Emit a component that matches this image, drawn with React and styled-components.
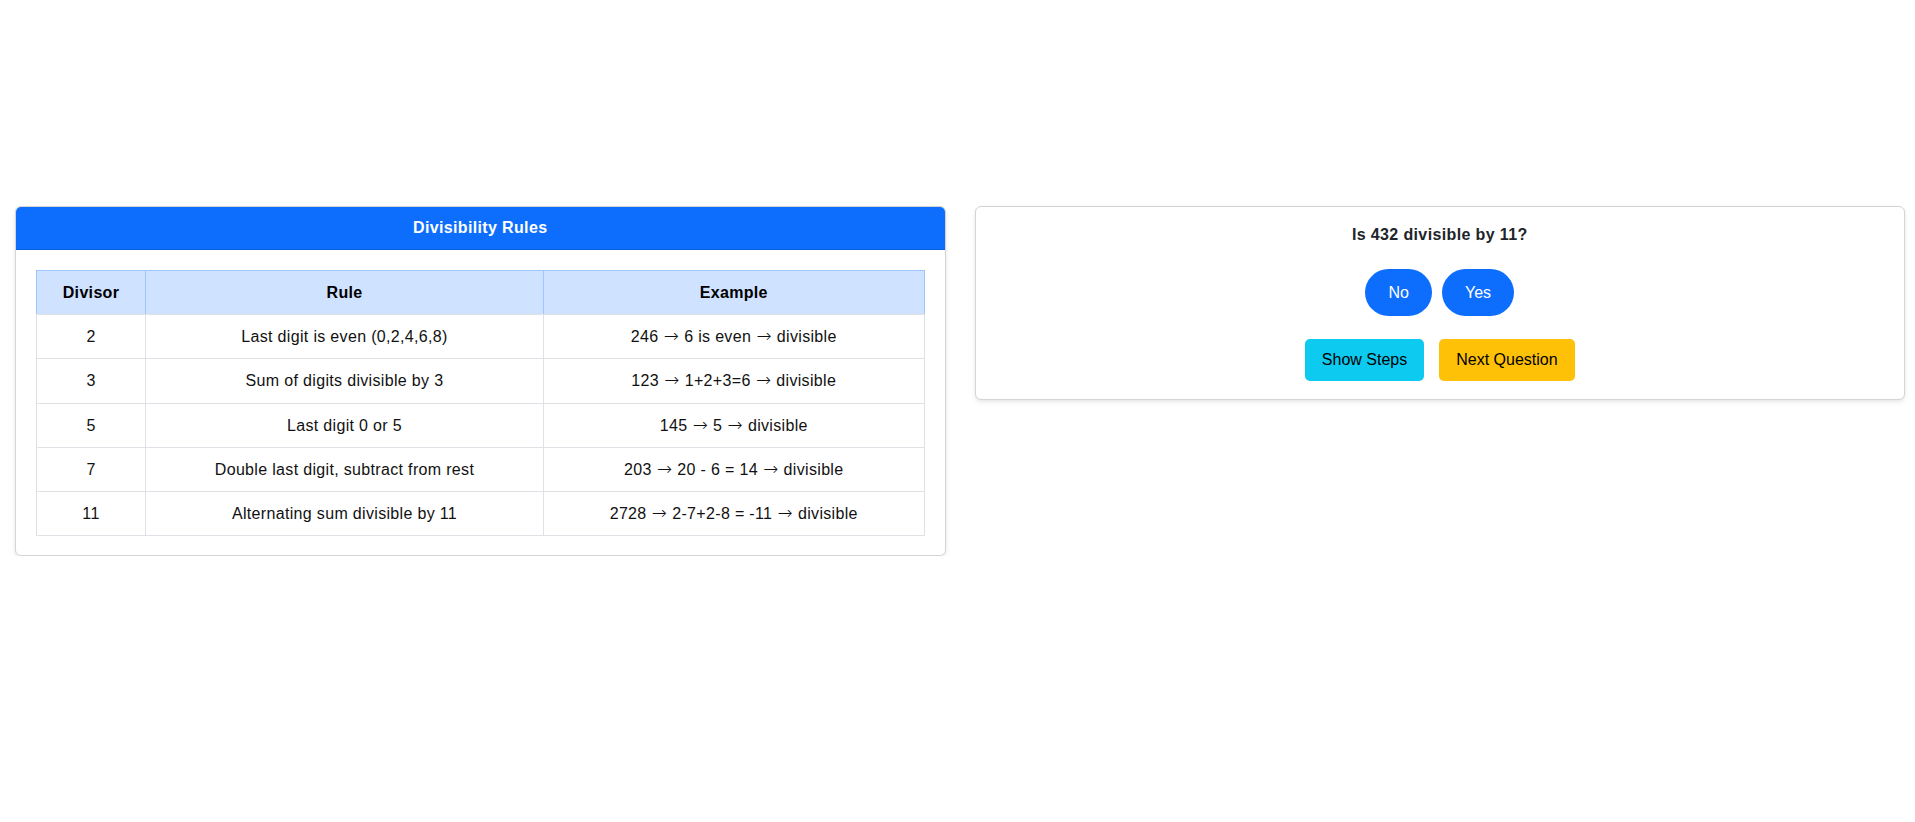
import React from "react";
import styled, { createGlobalStyle } from "styled-components";

const GlobalStyle = createGlobalStyle`
  html, body {
    margin: 0;
    padding: 0;
    background: #ffffff;
    font-family: "Liberation Sans", Arial, Helvetica, sans-serif;
    font-size: 16px;
    color: #212529;
  }
  * { box-sizing: border-box; }
`;

const Page = styled.div`
  display: grid;
  grid-template-columns: 1fr 1fr;
  gap: 29px;
  align-items: start;
  padding: 206px 10px 0 15px;
`;

const Panel = styled.section`
  background: #fff;
  border: 1px solid #d4d4d4;
  border-radius: 6px;
  box-shadow: 0 2px 4px rgba(0, 0, 0, 0.1);
  overflow: hidden;
`;

const PanelHeader = styled.header`
  background: #0d6efd;
  color: #fff;
  font-weight: bold;
  text-align: center;
  padding: 12px 16px;
  line-height: 18px;
  letter-spacing: 0.35px;
  border-bottom: 1px solid #0b5ed7;
`;

const PanelBody = styled.div`
  padding: 20px 20px 19px;
`;

const Table = styled.table`
  width: 100%;
  border-collapse: collapse;
  text-align: center;
  letter-spacing: 0.33px;
`;

const Th = styled.th`
  background: #cfe2ff;
  border: 1px solid #9ec5fe;
  border-bottom: 1px solid #dee2e6;
  padding: 12px 8px;
  line-height: 19.2px;
  font-weight: bold;
  color: #000;
  width: ${(p) => p.$w || "auto"};
`;

const Td = styled.td`
  border: 1px solid #dee2e6;
  padding: 12px 8px;
  line-height: 19.2px;
  color: #111;
`;

const Arrow = styled.span`
  font-family: "DejaVu Sans", sans-serif;
  font-weight: 200;
  font-size: 18px;
  line-height: 0;
  letter-spacing: 0;
  margin: 0 0.5px;
`;

const QuizBody = styled.div`
  padding: 18px 20px 18px;
  display: flex;
  flex-direction: column;
  align-items: center;
`;

const Question = styled.div`
  font-weight: bold;
  font-size: 16px;
  letter-spacing: 0.37px;
  line-height: 19px;
  color: #212529;
  margin-bottom: 25px;
`;

const ButtonRow = styled.div`
  display: flex;
  justify-content: center;
  gap: ${(p) => p.$gap}px;
  margin-bottom: ${(p) => p.$mb || 0}px;
`;

const AnswerButton = styled.button`
  font-family: inherit;
  font-size: 16px;
  line-height: 19px;
  padding: 14px 23px;
  border: none;
  border-radius: 25px;
  background: #0d6efd;
  color: #fff;
  cursor: pointer;
`;

const ActionButton = styled.button`
  font-family: inherit;
  font-size: 16px;
  line-height: 18px;
  padding: 12px 17px;
  border: none;
  border-radius: 5px;
  background: ${(p) => p.$bg};
  color: #000;
  cursor: pointer;
`;

const rules = [
  ["2", "Last digit is even (0,2,4,6,8)", ["246", "6 is even", "divisible"]],
  ["3", "Sum of digits divisible by 3", ["123", "1+2+3=6", "divisible"]],
  ["5", "Last digit 0 or 5", ["145", "5", "divisible"]],
  ["7", "Double last digit, subtract from rest", ["203", "20 - 6 = 14", "divisible"]],
  ["11", "Alternating sum divisible by 11", ["2728", "2-7+2-8 = -11", "divisible"]],
];

function Example({ parts }) {
  return (
    <>
      {parts.map((p, i) => (
        <React.Fragment key={i}>
          {i > 0 && (
            <>
              {" "}
              <Arrow>→</Arrow>{" "}
            </>
          )}
          {p}
        </React.Fragment>
      ))}
    </>
  );
}

export default function App() {
  return (
    <>
      <GlobalStyle />
      <Page>
        <Panel>
          <PanelHeader>Divisibility Rules</PanelHeader>
          <PanelBody>
            <Table>
              <thead>
                <tr>
                  <Th $w="109px">Divisor</Th>
                  <Th $w="398px">Rule</Th>
                  <Th>Example</Th>
                </tr>
              </thead>
              <tbody>
                {rules.map((r) => (
                  <tr key={r[0]}>
                    <Td>{r[0]}</Td>
                    <Td>{r[1]}</Td>
                    <Td>
                      <Example parts={r[2]} />
                    </Td>
                  </tr>
                ))}
              </tbody>
            </Table>
          </PanelBody>
        </Panel>
        <Panel>
          <QuizBody>
            <Question>Is 432 divisible by 11?</Question>
            <ButtonRow $gap={10} $mb={23}>
              <AnswerButton>No</AnswerButton>
              <AnswerButton>Yes</AnswerButton>
            </ButtonRow>
            <ButtonRow $gap={15}>
              <ActionButton $bg="#0dcaf0">Show Steps</ActionButton>
              <ActionButton $bg="#ffc107">Next Question</ActionButton>
            </ButtonRow>
          </QuizBody>
        </Panel>
      </Page>
    </>
  );
}
